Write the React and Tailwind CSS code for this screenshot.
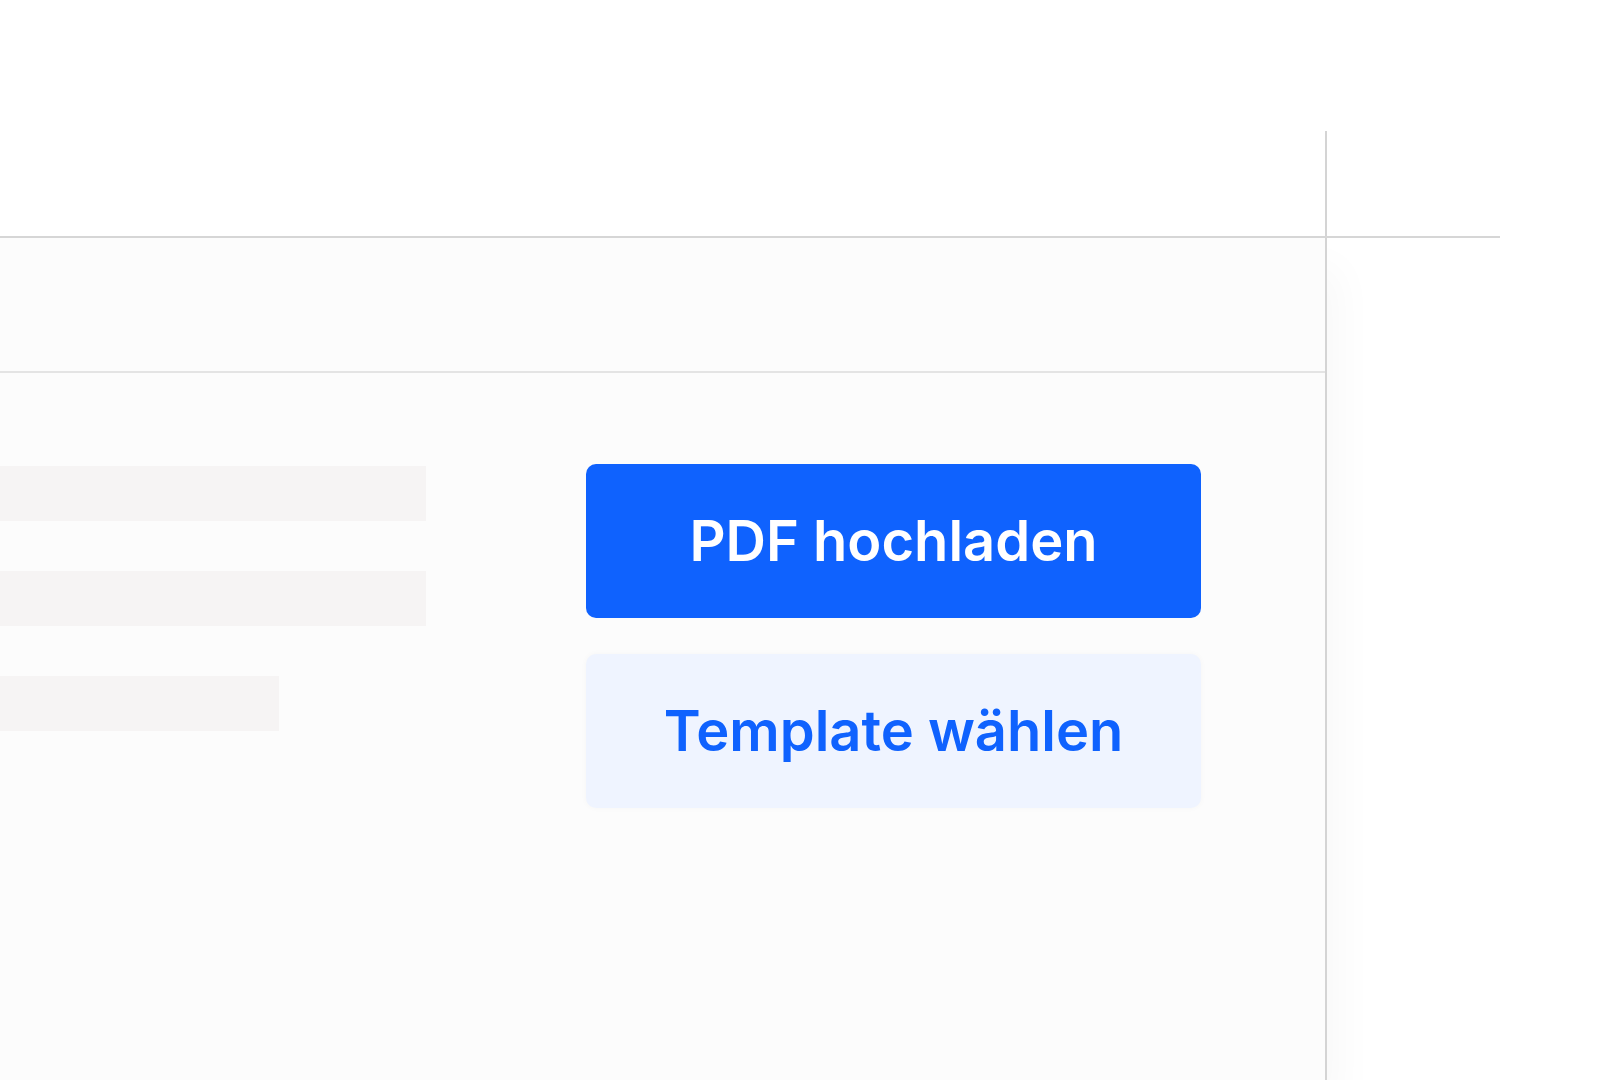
import React from 'react';

const font = { fontFamily: 'Inter, "Noto Sans", sans-serif' };

const App = () => {
  return (
    <div className="w-[1620px] h-[1080px] overflow-hidden bg-white" style={font}>
      <div className="flex h-[236px]">
        <div className="w-[1325px]" />
        <div className="w-[2px] mt-[131px] bg-[#d4d4d4]" />
      </div>
      <div className="w-[1500px] h-[2px] bg-[#d6d6d6]" />
      <div className="flex h-[842px]">
        <div className="w-[1327px] h-full bg-[#fcfcfc] border-r-2 border-[#d4d4d4] shadow-[12px_30px_40px_rgba(0,0,0,0.03)] flex flex-col">
          <div className="h-[135px] border-b-2 border-[#e4e4e4]" />
          <div className="flex pt-[91px]">
            <div className="w-[586px] flex flex-col gap-[50px] pt-[2px]">
              <div className="w-[426px] h-[55px] bg-[#f6f4f4]" />
              <div className="w-[426px] h-[55px] bg-[#f6f4f4]" />
              <div className="w-[279px] h-[55px] bg-[#f6f4f4]" />
            </div>
            <div className="w-[615px] flex flex-col gap-[36px]">
              <button className="h-[154px] rounded-[10px] bg-[#0f62fe] text-white text-[56px] font-semibold">
                PDF hochladen
              </button>
              <button className="h-[154px] rounded-[10px] bg-[#eff4ff] text-[#0f62fe] text-[56px] font-semibold shadow-[0_0_6px_rgba(0,0,0,0.03)]">
                Template wählen
              </button>
            </div>
          </div>
        </div>
      </div>
    </div>
  );
};

export default App;
